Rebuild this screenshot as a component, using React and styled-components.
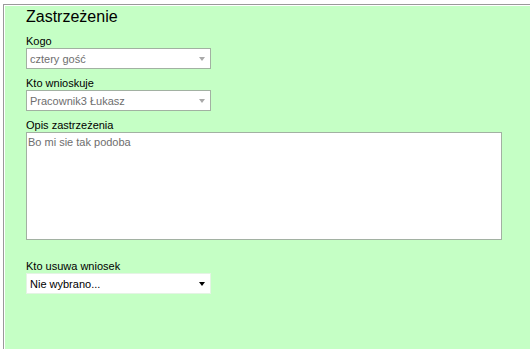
import React from "react";
import styled, { createGlobalStyle } from "styled-components";

const GlobalStyle = createGlobalStyle`
  html, body {
    margin: 0;
    padding: 0;
    background: #ffffff;
    overflow: hidden;
  }
  body {
    font-family: "Liberation Sans", Arial, sans-serif;
  }
`;

const Panel = styled.div`
  margin: 4px 0 0 3px;
  height: 345px;
  background: #c5ffc5;
  border-top: 1px solid #9a9a9a;
  border-left: 1px solid #9a9a9a;
  box-shadow: inset 1px 1px 0 #ffffff;
  padding: 3px 0 0 22px;
  box-sizing: border-box;
  display: flex;
  flex-direction: column;
`;

const Title = styled.h2`
  margin: 0;
  font-size: 16px;
  line-height: 18px;
  font-weight: normal;
  color: #000;
`;

const Label = styled.div`
  margin-top: ${(p) => p.gap}px;
  font-size: 11px;
  line-height: 13px;
  color: #000;
`;

const SelectBox = styled.div`
  width: 185px;
  height: 21px;
  box-sizing: border-box;
  background: #ffffff;
  border: 1px solid ${(p) => (p.disabled ? "#a2b1a2" : "#e4f4e4")};
  display: flex;
  align-items: center;
  justify-content: space-between;
  padding: 0 5px 0 3px;
  font-size: 11px;
  color: ${(p) => (p.disabled ? "#6e6e6e" : "#000")};
`;

const Arrow = styled.span`
  width: 0;
  height: 0;
  border-left: 3px solid transparent;
  border-right: 3px solid transparent;
  border-top: 4px solid ${(p) => (p.disabled ? "#a9a9a9" : "#000")};
  margin-top: 1px;
`;

const TextBox = styled.div`
  width: 476px;
  height: 108px;
  box-sizing: border-box;
  background: #ffffff;
  border: 1px solid #a2b1a2;
  padding: 3px 1px;
  font-size: 11px;
  line-height: 13px;
  color: #6e6e6e;
`;

const Select = ({ value, disabled }) => (
  <SelectBox disabled={disabled}>
    <span>{value}</span>
    <Arrow disabled={disabled} />
  </SelectBox>
);

export default function App() {
  return (
    <>
      <GlobalStyle />
      <Panel>
        <Title>Zastrzeżenie</Title>
        <Label gap={9}>Kogo</Label>
        <Select value="cztery gość" disabled />
        <Label gap={8}>Kto wnioskuje</Label>
        <Select value="Pracownik3 Łukasz" disabled />
        <Label gap={8}>Opis zastrzeżenia</Label>
        <TextBox>Bo mi sie tak podoba</TextBox>
        <Label gap={20}>Kto usuwa wniosek</Label>
        <Select value="Nie wybrano..." />
      </Panel>
    </>
  );
}
